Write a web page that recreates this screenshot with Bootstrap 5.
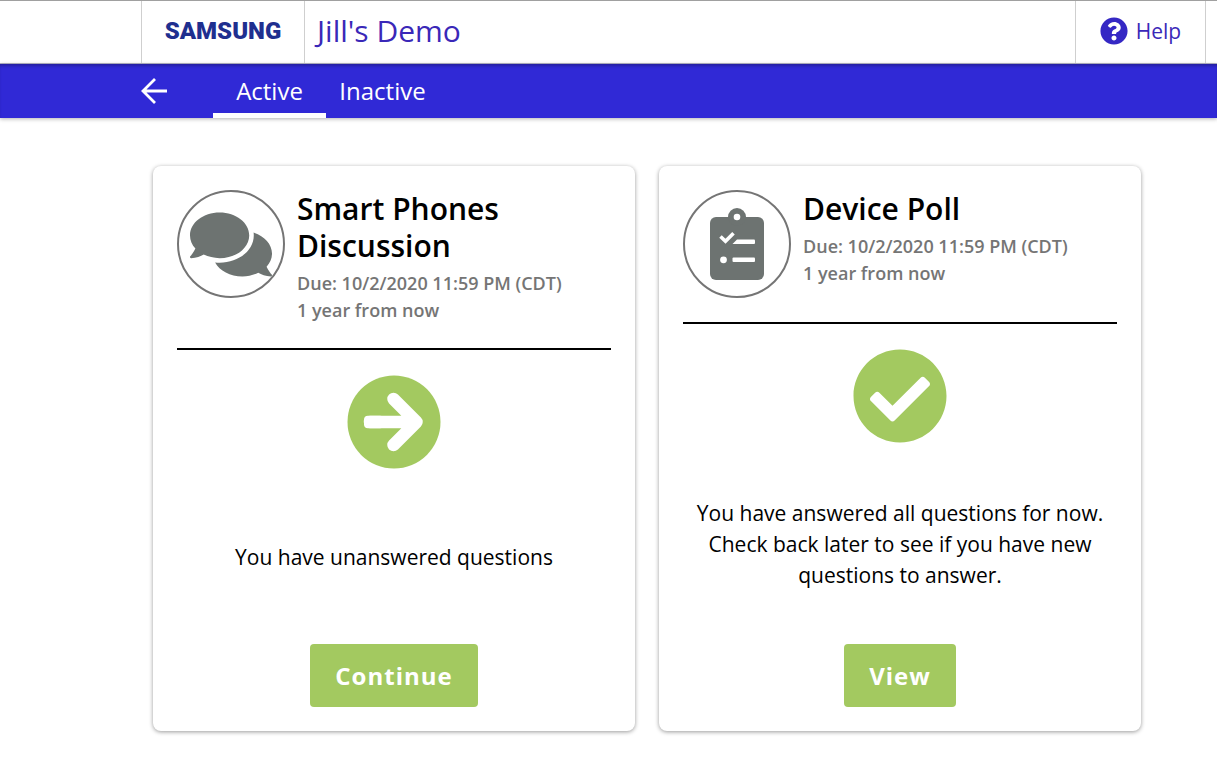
<!DOCTYPE html>
<html lang="en">
<head>
<meta charset="utf-8">
<meta name="viewport" content="width=device-width, initial-scale=1">
<title>Jill's Demo</title>
<link href="https://cdn.jsdelivr.net/npm/bootstrap@5.3.0/dist/css/bootstrap.min.css" rel="stylesheet">
<style>
  :root { --brand: #3029d6; --go: #a3c960; --ink: #6d7371; --edge: #cfcfcf; }
  body { font-family: "Open Sans", "Noto Sans", sans-serif; color: #000; background: #fff; }
  .site-header { height: 64px; border-top: 1px solid #a0a0a0; border-bottom: 1px solid #b4b4c4; padding-left: 141px; padding-right: 11px; }
  .logo-cell { width: 164px; border-left: 1px solid var(--edge); border-right: 1px solid var(--edge); }
  .logo-text { font: 900 24px/32px Roboto, "Liberation Sans", sans-serif; color: #1f2f8f; }
  .site-title { font-size: 30px; line-height: 40px; color: #3a28b8; padding-left: 12px; padding-bottom: 2px; }
  .help-link { width: 131px; font-size: 21px; line-height: 32px; color: #3a28b8; border-left: 1px solid var(--edge); border-right: 1px solid var(--edge); padding-bottom: 2px; }
  .logo-cell { padding-bottom: 2px; }
  .help-link svg { fill: #3528c4; }
  .tab-bar { height: 54px; background: var(--brand); padding-left: 141px; box-shadow: inset 0 3px 3px -1px rgba(0,0,0,.25), 0 1px 4px rgba(0,0,0,.3); }
  .back-link { width: 72px; }
  .tab-bar .nav-link { width: 113px; padding: 0; font-size: 24px; line-height: 54px; color: #fff; text-align: center; border-radius: 0; }
  .tab-bar .nav-link.active { box-shadow: inset 0 -5px 0 #fff; }
  main { padding: 48px 76px 48px 153px; }
  .task-card { min-height: 565px; padding: 24px; border: 0; border-radius: 8px; box-shadow: 0 1px 4px rgba(0,0,0,.4); }
  .task-head { gap: 12px; padding-bottom: 24px; border-bottom: 2px solid #000; }
  .type-icon { width: 108px; height: 108px; border: 2px solid #757575; border-radius: 50%; }
  .task-title { font-size: 30px; line-height: 37px; font-weight: 600; margin: 0 0 6px; }
  .due { font-size: 18px; line-height: 27px; font-weight: 600; color: #757575; }
  .message { font-size: 21px; line-height: 31px; }
  .btn-go { height: 63px; padding: 0 25px; border: 0; border-radius: 4px; font-size: 24px; font-weight: 700; letter-spacing: 1px; color: #fff; background: var(--go); }
  .btn-go:hover { background: #92b94f; color: #fff; }
</style>
</head>
<body>
<header class="site-header d-flex">
  <a href="#" class="logo-cell d-flex align-items-center justify-content-center text-decoration-none"><span class="logo-text">SAMSUNG</span></a>
  <h1 class="site-title fw-normal mb-0 align-self-center">Jill's Demo</h1>
  <a href="#" class="help-link ms-auto d-flex align-items-center justify-content-center gap-2 text-decoration-none">
    <svg width="28" height="28" viewBox="0 0 512 512" aria-hidden="true"><path d="M504 256c0 136.997-111.043 248-248 248S8 392.997 8 256C8 119.083 119.043 8 256 8s248 111.083 248 248zM262.655 90c-54.497 0-89.255 22.957-116.549 63.758-3.536 5.286-2.353 12.415 2.715 16.258l34.699 26.31c5.205 3.947 12.621 3.008 16.665-2.122 17.864-22.658 30.113-35.797 57.303-35.797 20.429 0 45.698 13.148 45.698 32.958 0 14.976-12.363 22.667-32.534 33.976C247.128 238.528 216 254.941 216 296v4c0 6.627 5.373 12 12 12h56c6.627 0 12-5.373 12-12v-1.333c0-28.462 83.186-29.647 83.186-106.667 0-58.002-60.165-102-116.531-102zM256 338c-25.365 0-46 20.635-46 46 0 25.364 20.635 46 46 46s46-20.636 46-46c0-25.364-20.635-46-46-46z"/></svg>
    <span>Help</span>
  </a>
</header>

<nav class="tab-bar d-flex">
  <a href="#" class="back-link d-flex align-items-center" aria-label="Back">
    <svg width="26" height="26" viewBox="0 0 26 26" fill="none" stroke="#fff" stroke-width="2.8" aria-hidden="true"><path d="M26 13H2M14 1 2 13l12 12"/></svg>
  </a>
  <div class="nav">
    <a href="#" class="nav-link active" aria-current="page">Active</a>
    <a href="#" class="nav-link">Inactive</a>
  </div>
</nav>

<main>
  <div class="row row-cols-2 gx-4">
    <div class="col">
      <article class="task-card card h-100">
        <div class="task-head d-flex">
          <div class="type-icon flex-shrink-0 d-flex align-items-center justify-content-center">
            <svg width="82" height="73" viewBox="0 0 576 512" fill="#6d7371" aria-hidden="true"><path d="M416 192c0-88.400-93.100-160-208-160S0 103.600 0 192c0 34.300 14.100 65.900 38 92-13.400 30.200-35.500 54.200-35.800 54.500-2.200 2.300-2.800 5.700-1.500 8.700S4.800 352 8 352c36.600 0 66.900-12.300 88.700-25 32.200 15.700 70.300 25 111.300 25 114.900 0 208-71.600 208-160zm122 220c23.900-26 38-57.700 38-92 0-66.900-53.500-124.200-129.300-148.100.9 6.600 1.300 13.300 1.300 20.100 0 105.900-107.700 192-240 192-10.800 0-21.300-.8-31.700-1.900C207.800 439.600 281.800 480 368 480c41 0 79.100-9.200 111.300-25 21.800 12.700 52.100 25 88.700 25 3.200 0 6.100-1.900 7.300-4.800 1.300-2.900.7-6.300-1.500-8.700-.3-.2-22.400-24.200-35.800-54.500z"/></svg>
          </div>
          <div>
            <h2 class="task-title">Smart Phones Discussion</h2>
            <div class="due">Due: 10/2/2020 11:59 PM (CDT)</div>
            <div class="due">1 year from now</div>
          </div>
        </div>
        <svg class="mt-4 mx-auto flex-shrink-0" width="96" height="96" viewBox="0 0 96 96" aria-hidden="true">
          <circle cx="48" cy="48" r="46.5" fill="#a3c960"/>
          <path d="M24 48h46M47.500 25l23 23-23 23" fill="none" stroke="#fff" stroke-width="12.500" stroke-linecap="round" stroke-linejoin="round"/>
          <rect x="18" y="41.700" width="20" height="12.600" rx="4" fill="#fff"/>
        </svg>
        <div class="message flex-grow-1 d-flex align-items-center justify-content-center text-center">You have unanswered questions</div>
        <button type="button" class="btn btn-go mx-auto">Continue</button>
      </article>
    </div>
    <div class="col">
      <article class="task-card card h-100">
        <div class="task-head d-flex">
          <div class="type-icon flex-shrink-0 d-flex align-items-center justify-content-center">
            <svg width="54" height="72" viewBox="0 0 54 72" aria-hidden="true">
              <rect y="9" width="54" height="63" rx="6" fill="#6d7371"/>
              <circle cx="27" cy="9" r="9" fill="#6d7371"/>
              <circle cx="27" cy="9" r="3.300" fill="#fff"/>
              <path d="M10.500 28.500l5 4.800 8-8" fill="none" stroke="#fff" stroke-width="3.600"/>
              <path d="M27 31.500h17q1 0 1 1v2.500q0 1-1 1H22.500z" fill="#fff"/>
              <rect x="22.500" y="49.500" width="22.500" height="4.500" rx="1" fill="#fff"/>
              <circle cx="13.500" cy="51.800" r="3.400" fill="#fff"/>
            </svg>
          </div>
          <div>
            <h2 class="task-title">Device Poll</h2>
            <div class="due">Due: 10/2/2020 11:59 PM (CDT)</div>
            <div class="due">1 year from now</div>
          </div>
        </div>
        <svg class="mt-4 mx-auto flex-shrink-0" width="96" height="96" viewBox="0 0 512 512" fill="#a3c960" aria-hidden="true"><path d="M504 256c0 136.967-111.033 248-248 248S8 392.967 8 256 119.033 8 256 8s248 111.033 248 248zM227.314 387.314l184-184c6.248-6.248 6.248-16.379 0-22.627l-22.627-22.627c-6.248-6.249-16.379-6.249-22.628 0L216 308.118l-70.059-70.059c-6.248-6.248-16.379-6.248-22.628 0l-22.627 22.627c-6.248 6.248-6.248 16.379 0 22.627l104 104c6.249 6.249 16.379 6.249 22.628.001z"/></svg>
        <div class="message flex-grow-1 d-flex align-items-center justify-content-center text-center">You have answered all questions for now. Check back later to see if you have new questions to answer.</div>
        <button type="button" class="btn btn-go mx-auto">View</button>
      </article>
    </div>
  </div>
</main>
<script src="https://cdn.jsdelivr.net/npm/bootstrap@5.3.0/dist/js/bootstrap.bundle.min.js"></script>
</body>
</html>
